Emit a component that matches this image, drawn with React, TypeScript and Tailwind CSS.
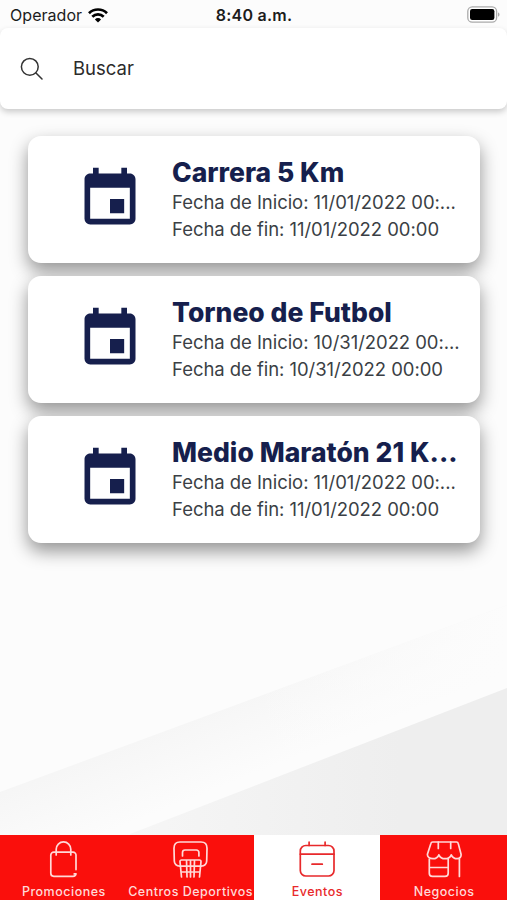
import { useState, type ReactNode } from 'react'
import { MdEvent } from 'react-icons/md'

type EventItem = { title: string; start: string; end: string }

const events: EventItem[] = [
  { title: 'Carrera 5 Km', start: '11/01/2022 00:00', end: '11/01/2022 00:00' },
  { title: 'Torneo de Futbol', start: '10/31/2022 00:00', end: '10/31/2022 00:00' },
  { title: 'Medio Maratón 21 Km', start: '11/01/2022 00:00', end: '11/01/2022 00:00' },
]

const shorten = (text: string, max: number) => (text.length > max ? text.slice(0, max) + '...' : text)

function TabIcon({ children }: { children: ReactNode }) {
  return (
    <svg
      viewBox="0 0 36 37"
      className="w-9 h-[37px] shrink-0"
      fill="none"
      stroke="currentColor"
      strokeWidth="1.7"
      strokeLinecap="round"
      strokeLinejoin="round"
    >
      {children}
    </svg>
  )
}

const tabs = [
  {
    label: 'Promociones',
    icon: (
      <TabIcon>
        <path d="M31 28.6V14.100a3 3 0 0 0-3-3H8.800a3 3 0 0 0-3 3v18.200a3 3 0 0 0 3 3H28c1.800 0 2.800-.9 3-2.400h-1.800" />
        <path d="M11.200 14V8.200a7.300 7.300 0 0 1 14.600 0V14" />
      </TabIcon>
    ),
  },
  {
    label: 'Centros Deportivos',
    icon: (
      <TabIcon>
        <path d="M8 25.200c-3.400-.3-5.600-2.200-5.700-5.200L2 7.200C2 3.300 4.300 1 8 1h21c3.700 0 6 2.300 6 6.200L34.700 20c-.1 3-2.300 4.900-5.700 5.200" />
        <path d="M10.500 15v-3.500a2.500 2.500 0 0 1 2.500-2.500h11.400a2.500 2.500 0 0 1 2.500 2.500V15" />
        <path d="M9.500 19h18a1.500 1.500 0 0 1 1.500 1.700L27.500 36M9.500 19A1.500 1.500 0 0 0 8 20.700L9.500 36M14.500 19l.5 17M22.500 19l-.5 17M18.500 19v17M8.500 25.200h20M9 31h19" />
      </TabIcon>
    ),
  },
  {
    label: 'Eventos',
    icon: (
      <TabIcon>
        <rect x="1.3" y="4.5" width="33.7" height="30.5" rx="5.5" />
        <path d="M1.300 13.200H35M10.100 1.200v3.300M26.100 1.200v3.300M13 23.200h10.300" />
      </TabIcon>
    ),
  },
  {
    label: 'Negocios',
    icon: (
      <TabIcon>
        <path d="M6.700 1h23.800a1.800 1.800 0 0 1 1.700 1.400L35 13c.5 2.700-1.200 4.700-3.700 4.700-2.700 0-5-1.600-6-3.900-1 2.400-3.300 3.900-6.200 3.900s-5.200-1.500-6.200-3.900c-1 2.300-3.200 3.900-5.900 3.900-3.500 0-6-2-5.500-4.700L4.900 2.400A1.800 1.800 0 0 1 6.700 1z" />
        <path d="M12.300 1v6.500M24.700 1v6.500M3.300 18v14.200a3.200 3.200 0 0 0 3.200 3.200H19a3.200 3.200 0 0 0 3.200-3.200V18M3.300 26.500h18.900M33.400 18v17.500" />
      </TabIcon>
    ),
  },
]

// Soft diagonal bands behind the list
function Backdrop() {
  return (
    <svg viewBox="0 0 507 900" className="absolute inset-0 -z-10 w-full h-full">
      <defs>
        <linearGradient id="band" gradientUnits="userSpaceOnUse" x1="220" y1="695" x2="252" y2="775">
          <stop offset="0" stopColor="#f5f5f5" />
          <stop offset="1" stopColor="#fcfcfc" />
        </linearGradient>
        <linearGradient id="bandFade" gradientUnits="userSpaceOnUse" x1="250" y1="0" x2="507" y2="0">
          <stop offset="0" stopColor="#fcfcfc" stopOpacity="0" />
          <stop offset="1" stopColor="#fcfcfc" />
        </linearGradient>
        <linearGradient id="corner" gradientUnits="userSpaceOnUse" x1="130" y1="830" x2="400" y2="830">
          <stop offset="0" stopColor="#f6f6f6" />
          <stop offset="1" stopColor="#eeeeee" />
        </linearGradient>
      </defs>
      <rect width="507" height="900" fill="#fcfcfc" />
      <path d="M0 792L507 605V900H0z" fill="url(#band)" />
      <path d="M0 792L507 605V900H0z" fill="url(#bandFade)" />
      <path d="M130 834L507 688V900H130z" fill="url(#corner)" />
    </svg>
  )
}

function StatusBar() {
  return (
    <div className="h-7 shrink-0 px-[10px] grid grid-cols-3 items-center text-[#1c1c1c]">
      <div className="flex items-center gap-[6px] pt-[2px]">
        <span className="text-[16px] leading-5 tracking-[0.05px]">Operador</span>
        <svg viewBox="0 0 20 15" className="w-5 h-[15px]" fill="none" stroke="#000" strokeWidth="2.7">
          <path d="M1 5.200a12.800 12.800 0 0 1 18 0M4.300 8.700a8.100 8.100 0 0 1 11.400 0" />
          <path d="M10 14.500L6.900 11.400a4.400 4.400 0 0 1 6.200 0z" fill="#000" stroke="none" />
        </svg>
      </div>
      <span className="text-center text-[16px] leading-5 font-semibold tracking-[0.25px] pt-[2px] pl-[1px] whitespace-nowrap">
        8:40 a.m.
      </span>
      <div className="flex justify-end">
        <svg viewBox="0 0 33 17" className="w-[33px] h-[17px] -mr-[3px]">
          <rect x="0.8" y="0.8" width="28.8" height="15.4" rx="4.5" fill="#fff" stroke="#aaa" strokeWidth="1.3" />
          <rect x="3" y="3" width="24.4" height="11" rx="2.2" fill="#000" />
          <path d="M31 6.500c2 .6 2 3.600 0 4.200z" fill="#aaa" />
        </svg>
      </div>
    </div>
  )
}

function SearchBox() {
  return (
    <label className="h-[81px] shrink-0 flex items-center gap-[30px] pl-5 bg-white rounded-lg shadow-[0_3px_6px_rgba(0,0,0,0.2)]">
      <svg viewBox="0 0 23 23" className="w-[23px] h-[23px]" fill="none" stroke="#333" strokeWidth="1.5" strokeLinecap="round">
        <circle cx="9.8" cy="9.8" r="8.4" />
        <path d="M16 16l6 6" />
      </svg>
      <input
        placeholder="Buscar"
        className="w-80 text-[18.5px] outline-none placeholder:text-[#2b2b2b] placeholder:opacity-100"
      />
    </label>
  )
}

function EventCard({ event }: { event: EventItem }) {
  return (
    <article className="h-[126.5px] flex items-start bg-white rounded-[13px] shadow-[0_8px_18px_rgba(0,0,0,0.42)]">
      <MdEvent className="w-[68px] h-[68px] ml-[47.5px] mt-[29px] shrink-0 text-[#161f4d]" />
      <div className="ml-[28.5px] mt-[20px] text-[18.5px] leading-[27px] tracking-[-0.05px] text-[#3b3f45] whitespace-nowrap">
        <h2 className="text-[26.5px] leading-[33px] font-extrabold tracking-[0.02px] text-[#161f4d]">
          {shorten(event.title, 18)}
        </h2>
        <p>{shorten(`Fecha de Inicio: ${event.start}`, 31)}</p>
        <p>Fecha de fin: {event.end}</p>
      </div>
    </article>
  )
}

export default function App() {
  const [active, setActive] = useState('Eventos')

  return (
    <div className="relative isolate w-[507px] h-[900px] flex flex-col overflow-hidden font-['Inter',sans-serif]">
      <Backdrop />
      <StatusBar />
      <SearchBox />

      <main className="flex-1 flex flex-col gap-[13.5px] pt-[27px] pl-7 pr-[27px]">
        {events.map(event => (
          <EventCard key={event.title} event={event} />
        ))}
      </main>

      {/* Bottom tabs */}
      <nav className="h-[65.5px] shrink-0 grid grid-cols-4 bg-[#fa0f0c]">
        {tabs.map(tab => (
          <button
            key={tab.label}
            onClick={() => setActive(tab.label)}
            className={`flex flex-col items-center pt-[6px] ${
              active === tab.label ? 'bg-white text-[#e8292b]' : 'text-[#ffd9d8]'
            }`}
          >
            {tab.icon}
            <span className="mt-[6px] pl-[1px] text-[12.5px] leading-4 font-medium tracking-[0.5px] whitespace-nowrap">
              {tab.label}
            </span>
          </button>
        ))}
      </nav>
    </div>
  )
}
